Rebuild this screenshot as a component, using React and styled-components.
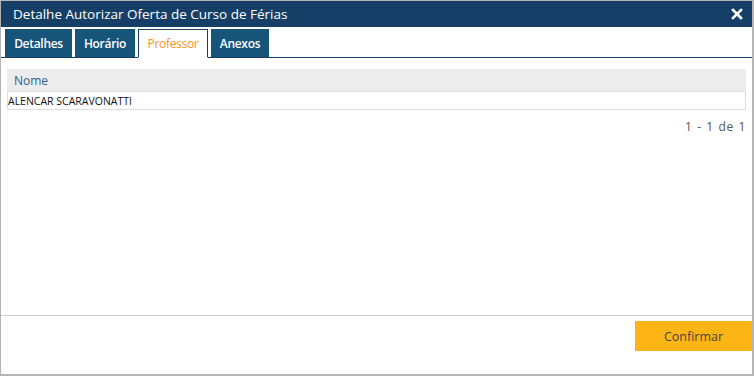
import React, { useState } from 'react';
import styled, { createGlobalStyle } from 'styled-components';

const GlobalStyle = createGlobalStyle`
    body {
        margin: 0;
        font-family: "Open Sans", "Noto Sans", sans-serif;
        background: #ffffff;
    }
`;

const Dialog = styled.div`
    width: 754px;
    height: 376px;
    box-sizing: border-box;
    border: 1px solid #b4b4b4;
    border-right-width: 2px;
    border-bottom-width: 2px;
    display: flex;
    flex-direction: column;
    background: #fff;
`;

const Header = styled.div`
    height: 26px;
    background: #153f66;
    color: #fff;
    display: flex;
    align-items: center;
    justify-content: space-between;
    padding: 0 9px 0 12px;
    font-size: 13.5px;
`;

const Close = styled.button`
    border: none;
    background: none;
    padding: 0;
    width: 12px;
    height: 12px;
    cursor: pointer;
    display: flex;
`;

const TabBar = styled.div`
    display: flex;
    gap: 3px;
    padding: 2px 4px 0;
    border-bottom: 1px solid #153f66;
`;

const Tab = styled.div`
    width: ${p => p.$width}px;
    height: 29px;
    box-sizing: border-box;
    display: flex;
    align-items: center;
    justify-content: center;
    font-size: 12px;
    letter-spacing: -0.3px;
    cursor: pointer;
    margin-bottom: -1px;
    color: ${p => (p.$active ? '#f7941d' : '#fff')};
    background: ${p => (p.$active ? '#fff' : '#175479')};
    font-weight: ${p => (p.$active ? 400 : 600)};
    border: 1px solid ${p => (p.$active ? '#153f66' : '#175479')};
    border-bottom-color: ${p => (p.$active ? '#fff' : '#153f66')};
`;

const Content = styled.div`
    flex: 1;
    padding: 11px 6px 0 6px;
`;

const Table = styled.div`
    display: flex;
    flex-direction: column;
`;

const HeadCell = styled.div`
    height: 22px;
    background: #ececec;
    color: #2d5f8b;
    font-size: 12px;
    display: flex;
    align-items: center;
    padding-left: 7px;
`;

const Row = styled.div`
    height: 19px;
    box-sizing: border-box;
    border: 1px solid #dedede;
    font-size: 10.5px;
    color: #111;
    display: flex;
    align-items: center;
`;

const Pager = styled.div`
    text-align: right;
    font-size: 12px;
    letter-spacing: 0.6px;
    word-spacing: 1px;
    color: #555;
    padding: 8px 0 0;
`;

const Footer = styled.div`
    height: 59px;
    border-top: 1px solid #cfcfcf;
    display: flex;
    justify-content: flex-end;
    align-items: flex-start;
    padding-top: 5px;
    box-sizing: border-box;
`;

const ConfirmButton = styled.button`
    width: 117px;
    height: 30px;
    border: none;
    background: #fdb515;
    color: #444;
    font-family: inherit;
    font-size: 12.5px;
    cursor: pointer;
`;

const tabs = [
    { name: 'Detalhes', width: 67 },
    { name: 'Horário', width: 60 },
    { name: 'Professor', width: 70 },
    { name: 'Anexos', width: 58 },
];

export default function App() {
    const [active, setActive] = useState('Professor');

    return (
        <>
            <GlobalStyle />
            <Dialog>
                <Header>
                    <span>Detalhe Autorizar Oferta de Curso de Férias</span>
                    <Close aria-label="Fechar">
                        <svg width="12" height="12" viewBox="0 0 12 12">
                            <path d="M2 2 L10 10 M10 2 L2 10" stroke="#fff" strokeWidth="2.6" strokeLinecap="square" />
                        </svg>
                    </Close>
                </Header>
                <TabBar>
                    {tabs.map(t => (
                        <Tab
                            key={t.name}
                            $width={t.width}
                            $active={active === t.name}
                            onClick={() => setActive(t.name)}>
                            {t.name}
                        </Tab>
                    ))}
                </TabBar>
                <Content>
                    <Table>
                        <HeadCell>Nome</HeadCell>
                        <Row>ALENCAR SCARAVONATTI</Row>
                    </Table>
                    <Pager>1 - 1 de 1</Pager>
                </Content>
                <Footer>
                    <ConfirmButton>Confirmar</ConfirmButton>
                </Footer>
            </Dialog>
        </>
    );
}
